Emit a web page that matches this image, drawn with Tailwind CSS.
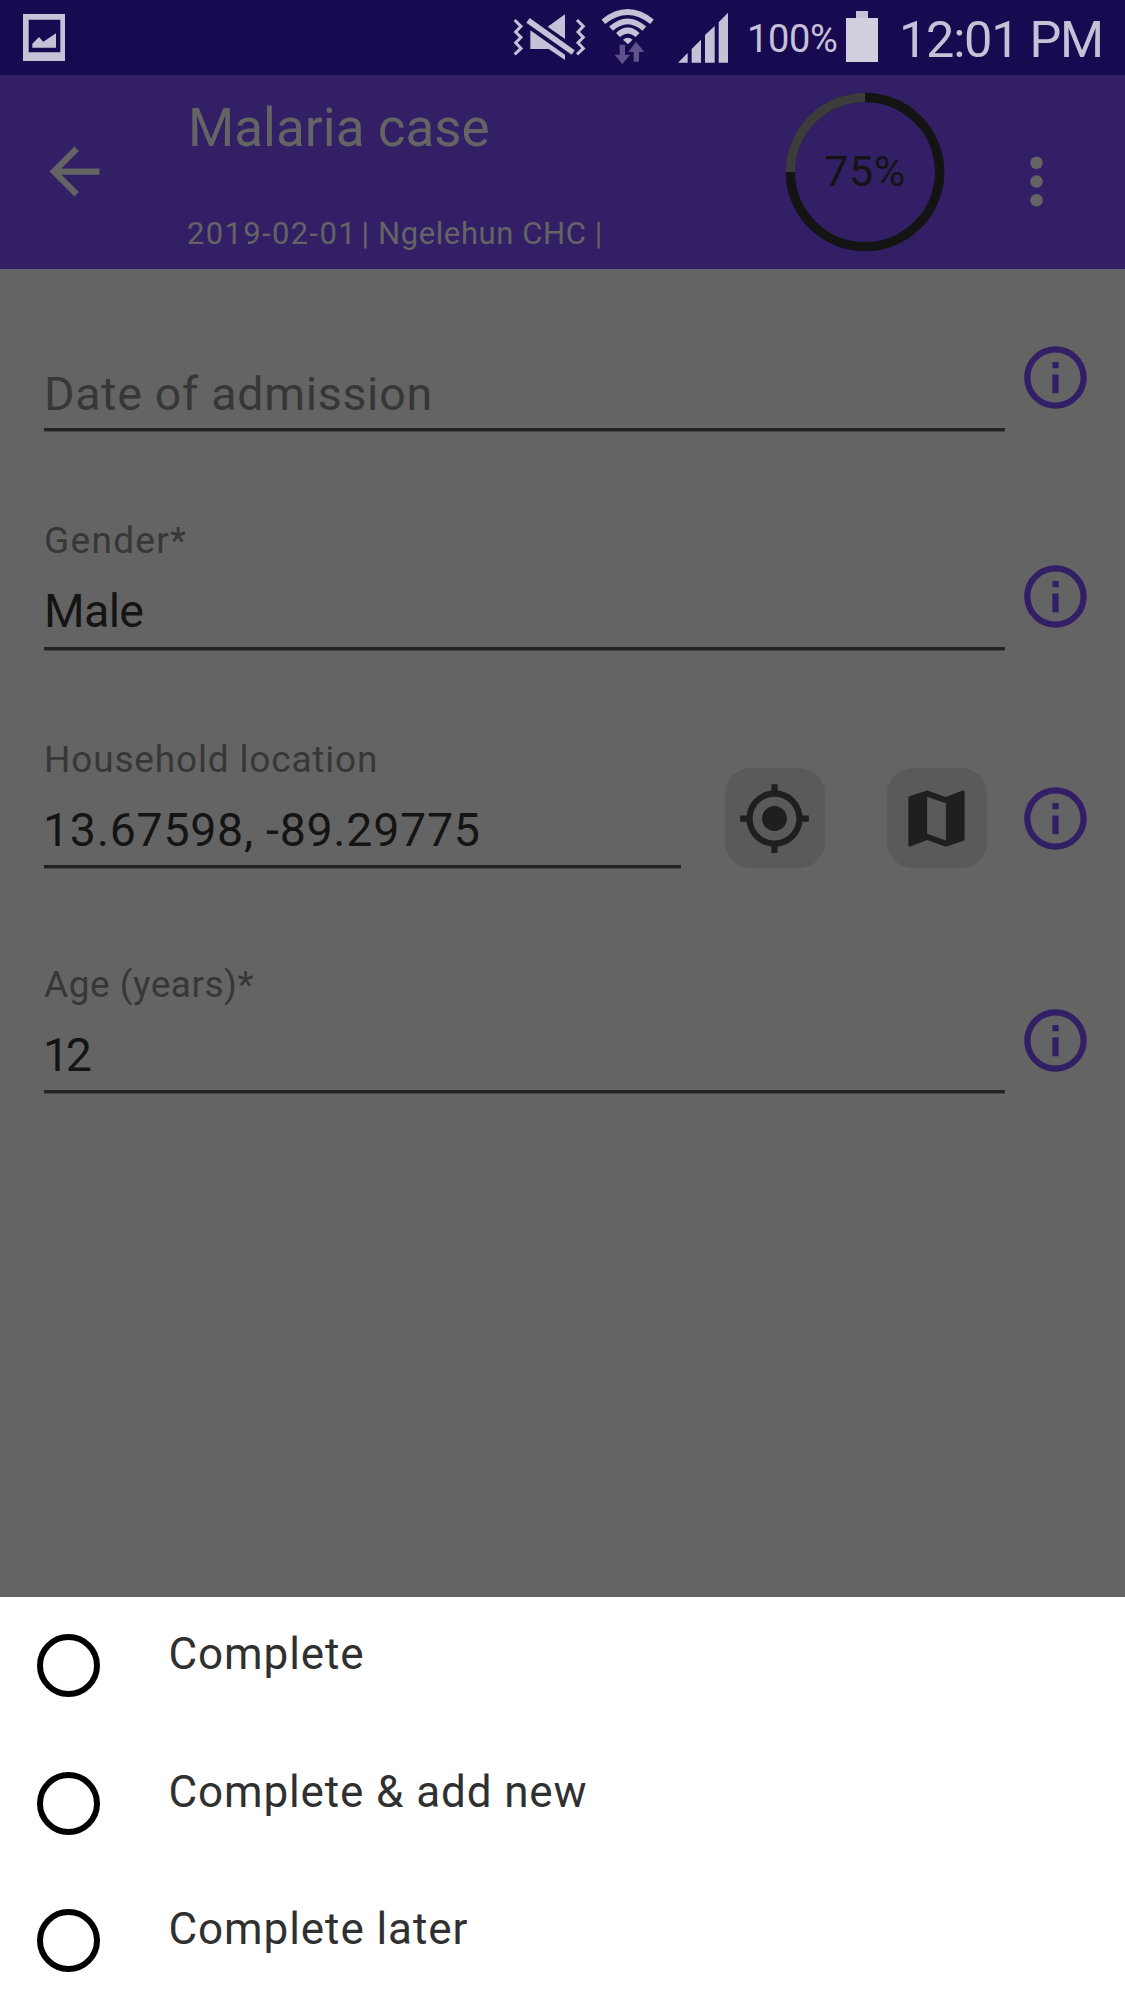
<!DOCTYPE html>
<html lang="en">
<head>
<meta charset="utf-8">
<title>Malaria case</title>
<script src="https://cdn.jsdelivr.net/npm/@tailwindcss/browser@4"></script>
</head>
<body class="w-[1125px] h-[1999px] overflow-hidden bg-[#646464] font-['Roboto',sans-serif] flex flex-col whitespace-nowrap">
<svg class="hidden">
  <symbol id="info" viewBox="0 0 24 24"><path d="M11 7h2v2h-2zm0 4h2v6h-2zm1-9C6.48 2 2 6.48 2 12s4.48 10 10 10 10-4.48 10-10S17.52 2 12 2zm0 18c-4.41 0-8-3.59-8-8s3.59-8 8-8 8 3.59 8 8-3.59 8-8 8z"/></symbol>
</svg>

<!-- Status bar -->
<div class="h-[75px] shrink-0 bg-[#180a50] text-[#c6c1d6] flex items-start">
  <svg class="ml-[23px] mt-[14px] w-[42px] h-[47px] shrink-0" viewBox="69 42 126 141" fill="currentColor"><path fill-rule="evenodd" d="M69 42H195V183H69zM86 59V157H181V59z"/><path d="M97 131L117 111L130 125L168 100V143H97z"/></svg>
  <svg class="ml-[435px] w-[240px] h-[75px] shrink-0" viewBox="0 0 720 225" fill="currentColor">
    <g fill="none" stroke="currentColor" stroke-width="9"><path d="M44 60L63 79L47 96L63 112L47 128L63 145L44 163"/><path d="M231 60L250 79L234 96L250 112L234 128L250 145L231 163"/></g>
    <path d="M195 43V117L143 80z"/><path d="M91 91L195 164V180L146 147H91z"/><path d="M89 54L224 151L215 164L79 68z"/>
    <g fill="none" stroke="currentColor" stroke-width="17"><path d="M310 65Q383 7 456 65"/><path d="M333 86Q383 42 433 86"/><path d="M354 105Q383 78 413 105"/></g>
    <path d="M369 119Q383 108 398 119L384 133z"/>
    <path fill="#5f5289" d="M359 134H375V164H390L367 193L344 164H359z"/><path fill="#5f5289" d="M401 185V156H385L408 125L433 156H417V185z"/>
    <path d="M534 188L563 159V188zM575 188V147L603 119V188zM615 188V105L644 78V188zM656 188V67L684 38V188z"/>
  </svg>
  <span class="ml-[7px] pt-[2px] w-[98px] text-[38px] leading-[75px] tracking-[-0.36px]">100%</span>
  <svg class="ml-[1px] mt-[11px] w-[32px] h-[51px] shrink-0" viewBox="0 0 32 51"><path fill="#c6c1d6" d="M10 0h12v7H10z"/><path fill="#d1cede" d="M0 7h32v44H0z"/></svg>
  <span class="ml-[21px] pt-[2px] text-[50.5px] leading-[75px] tracking-[-1.3px]">12:01 PM</span>
</div>

<!-- App bar -->
<header class="h-[194px] shrink-0 bg-[#331f66] text-[#646464] flex items-start">
  <svg class="ml-[37px] mt-[59px] size-[75px] shrink-0" viewBox="0 0 24 24" fill="currentColor"><path d="M20 11H7.83l5.59-5.59L12 4l-8 8 8 8 1.41-1.41L7.83 13H20v-2z"/></svg>
  <div class="ml-[75px] pt-[23px] w-[597px]">
    <h1 class="pl-px text-[53px] leading-[60px]">Malaria case</h1>
    <div class="mt-[56px] flex text-[31px] leading-[40px]"><span class="w-[174.5px] tracking-[1.35px]">2019-02-01</span><span class="tracking-[0.6px]">| Ngelehun CHC |</span></div>
  </div>
  <div class="mt-[17px] w-[160px] h-[160px] grid place-items-center shrink-0 ml-[1px]">
    <svg class="col-start-1 row-start-1 size-[160px]" viewBox="0 0 160 160" fill="none" stroke-width="9.5"><circle cx="80" cy="80" r="74.6" stroke="#141414"/><path d="M5.4 80A74.6 74.6 0 0 1 80 5.4" stroke="#3c3c3c"/></svg>
    <span class="col-start-1 row-start-1 pb-[2px] text-[43px] leading-[50px] tracking-[0.58px] text-[#141414]">75%</span>
  </div>
  <svg class="ml-[54px] mt-[69px] size-[75px] shrink-0" viewBox="0 0 24 24" fill="currentColor"><circle cx="12" cy="6" r="2"/><circle cx="12" cy="12" r="2"/><circle cx="12" cy="18" r="2"/></svg>
</header>

<!-- Form -->
<main class="h-[1328px] shrink-0 flex flex-col text-[#141414]">
  <div class="h-[163px] flex items-end pl-[44px]">
    <div class="w-[961px] mb-px border-b-[3px] border-[#222222] shadow-[0_1px_0_#484848] pb-[6px] text-[46.5px] leading-[56px] tracking-[0.72px] text-[#373737]">Date of admission</div>
    <svg class="ml-[13px] mb-[17px] size-[75px] fill-[#331f66]"><use href="#info"/></svg>
  </div>
  <div class="h-[219px] flex items-end pl-[44px]">
    <div class="w-[961px] mb-px border-b-[3px] border-[#222222] shadow-[0_1px_0_#484848] pb-[8px]">
      <div class="text-[37px] leading-[44px] tracking-[1.29px] text-[#373737]">Gender*</div>
      <div class="mt-[20px] text-[46.5px] leading-[56px] tracking-[-0.63px]">Male</div>
    </div>
    <svg class="ml-[13px] mb-[17px] size-[75px] fill-[#331f66]"><use href="#info"/></svg>
  </div>
  <div class="h-[218px] flex items-end pl-[44px]">
    <div class="w-[637px] mb-px border-b-[3px] border-[#222222] shadow-[0_1px_0_#484848] pb-[7px]">
      <div class="text-[37px] leading-[44px] tracking-[0.83px] text-[#373737]">Household location</div>
      <div class="mt-[20px] -ml-[1px] text-[46.5px] leading-[56px] tracking-[0.72px]">13.67598, -89.29775</div>
    </div>
    <div class="ml-[43.5px] mb-px size-[100px] rounded-[26px] bg-[#5a5a5a] grid place-items-center">
      <svg class="size-[75px] fill-[#1f1f1f]" viewBox="0 0 24 24"><path d="M12 8c-2.210 0-4 1.790-4 4s1.790 4 4 4 4-1.790 4-4-1.790-4-4-4zm8.940 3c-.46-4.170-3.770-7.480-7.940-7.940V1h-2v2.060C6.830 3.520 3.520 6.830 3.060 11H1v2h2.060c.46 4.170 3.770 7.480 7.940 7.940V23h2v-2.060c4.170-.46 7.480-3.770 7.940-7.940H23v-2h-2.060zM12 19c-3.870 0-7-3.130-7-7s3.130-7 7-7 7 3.130 7 7-3.130 7-7 7z"/></svg>
    </div>
    <div class="ml-[62px] mb-px size-[100px] rounded-[26px] bg-[#5a5a5a] grid place-items-center">
      <svg class="size-[75px] fill-[#1f1f1f]" viewBox="0 0 24 24"><path d="M20.500 3l-.16.03L15 5.100 9 3 3.360 4.900c-.21.07-.36.25-.36.480V20.500c0 .28.22.5.5.5l.16-.03L9 18.900l6 2.100 5.640-1.900c.21-.07.36-.25.36-.48V3.500c0-.28-.22-.5-.5-.5zM15 19l-6-2.110V5l6 2.110V19z"/></svg>
    </div>
    <svg class="ml-[31.5px] mb-[13px] size-[75px] fill-[#331f66]"><use href="#info"/></svg>
  </div>
  <div class="h-[225px] flex items-end pl-[44px]">
    <div class="w-[961px] mb-px border-b-[3px] border-[#222222] shadow-[0_1px_0_#484848] pb-[7px]">
      <div class="text-[37px] leading-[44px] tracking-[0.5px] text-[#373737]">Age (years)*</div>
      <div class="mt-[20px] -ml-[1px] text-[46.5px] leading-[56px] tracking-[-3.4px]">12</div>
    </div>
    <svg class="ml-[13px] mb-[16px] size-[75px] fill-[#331f66]"><use href="#info"/></svg>
  </div>
</main>

<!-- Bottom sheet -->
<section class="h-[402px] shrink-0 bg-white text-[#303030] text-[44px] leading-[56px]">
  <div class="h-[137.5px] flex items-start pl-[37px]"><span class="mt-[37px] size-[63px] rounded-full border-[6px] border-black"></span><span class="ml-[68.5px] pt-[29px] tracking-[0.9px]">Complete</span></div>
  <div class="h-[137.5px] flex items-start pl-[37px]"><span class="mt-[37px] size-[63px] rounded-full border-[6px] border-black"></span><span class="ml-[68.5px] pt-[29px] tracking-[0.88px]">Complete &amp; add new</span></div>
  <div class="h-[127px] flex items-start pl-[37px]"><span class="mt-[37px] size-[63px] rounded-full border-[6px] border-black"></span><span class="ml-[68.5px] pt-[29px] tracking-[0.92px]">Complete later</span></div>
</section>
</body>
</html>
